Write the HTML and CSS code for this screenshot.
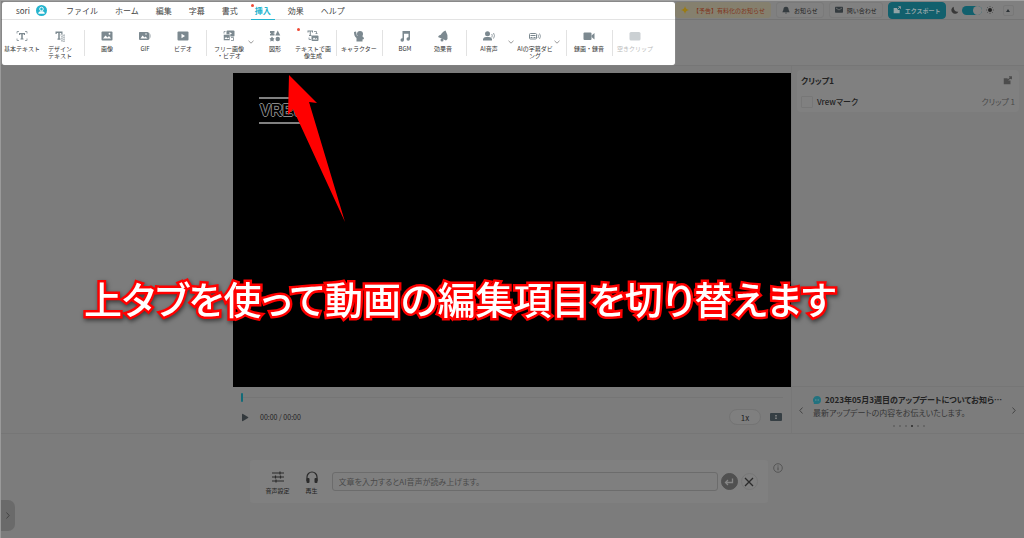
FILE: index.html
```html
<!DOCTYPE html>
<html lang="ja">
<head>
<meta charset="utf-8">
<meta name="viewport" content="width=device-width, initial-scale=1">
<title>Vrew</title>
<link rel="stylesheet" href="styles.css">
</head>
<body>
<div class="app">
  <header class="header">
    <div class="ribbon">
      <nav class="tabs">
        <span class="user">sori
          <svg class="avatar" viewBox="0 0 22 22"><circle cx="11" cy="11" r="11" fill="#25b4ce"/><circle cx="11" cy="8" r="3.6" fill="none" stroke="#fff" stroke-width="1.8"/><path d="M4.500 17.500c0-3.600 3-4.800 6.500-4.800s6.500 1.200 6.500 4.800z" fill="#fff"/></svg>
        </span>
        <button class="tab">ファイル</button>
        <button class="tab">ホーム</button>
        <button class="tab">編集</button>
        <button class="tab">字幕</button>
        <button class="tab">書式</button>
        <button class="tab active"><i class="dot"></i>挿入</button>
        <button class="tab">効果</button>
        <button class="tab">ヘルプ</button>
      </nav>
      <div class="tools">
        <div class="group first">
          <button class="tool"><svg viewBox="0 0 24 24"><path d="M2 7V3h4M18 3h4v4M22 17v4h-4M6 21H2v-4" fill="none" stroke="#7c8990" stroke-width="1.5"/><path d="M6 6h12v4h-2.200V8.500h-2.300V17h1.500v2H9v-2h1.500V8.500H8.200V10H6z"/></svg>基本テキスト</button>
          <button class="tool"><svg viewBox="0 0 24 24"><path d="M3 3h14v5h-2.500V6h-3v11h1.500v2.500H7V17h1.500V6h-3v2H3z"/><path d="M13 10c3-2 5 2 9 0M14 14c3-2 4 2 8 0M14 18c3-2 4 2 8 0M14 22c3-2 4 2 8 0" fill="none" stroke="#7c8990" stroke-width="1.6"/></svg>デザイン<br>テキスト</button>
        </div>
        <div class="group">
          <button class="tool"><svg viewBox="0 0 24 24"><path d="M3 3h18q2 0 2 2v14q0 2-2 2H3q-2 0-2-2V5q0-2 2-2z"/><path d="M4 17l5-6 4 4 3-3 4 5z" fill="#fff"/><circle cx="17" cy="7.500" r="1.800" fill="#fff"/></svg>画像</button>
          <button class="tool"><svg viewBox="0 0 24 24"><path d="M1 4h16q3 0 3 3v11q0 2-2 2H2q-2 0-2-2V6q0-2 1-2zM21 5q4 7 0 14z"/><path d="M3 17l4-6 4 4 2-2 4 4z" fill="#fff"/><circle cx="14" cy="8" r="1.500" fill="#fff"/></svg>GIF</button>
          <button class="tool"><svg viewBox="0 0 24 24"><rect x="1" y="3" width="22" height="18" rx="2"/><path d="M9 7.500v9l7-4.500z" fill="#fff"/></svg>ビデオ</button>
        </div>
        <div class="group">
          <button class="tool"><svg viewBox="0 0 24 24"><rect x="7" y="1" width="16" height="12" rx="2"/><path d="M13 4v6l5-3z" fill="#fff"/><rect x="1" y="9" width="13" height="12" rx="2" stroke="#fff"/><path d="M3 18l3-4 3 3 2-2 2 3z" fill="#fff"/><path d="M16 15h5v6h-5M2 7V3h3" fill="none" stroke="#7c8990" stroke-width="1.600"/></svg>フリー画像<br>・ビデオ</button>
          <button class="more" aria-label="その他"><svg viewBox="0 0 6 4"><path d="M.5.8 3 3.200 5.500.8"/></svg></button>
          <button class="tool"><svg viewBox="0 0 24 24"><path d="M2 2h9v3.500H9V7h2v4H2V7.500h2V6H2z"/><path d="M17.500 1l5 10h-10z"/><path d="M6 13l2 3 3 1-2 2.500.3 3.500L6 21.500 2.700 23 3 19.500 1 17l3-1z"/><circle cx="17.500" cy="18" r="4.500"/></svg>図形</button>
          <button class="tool"><i class="dot"></i><svg viewBox="0 0 24 24"><path d="M1 1h11v4h-2V3H7.500v7H9v2H4v-2h1.500V3H3v2H1z"/><path d="M14 3h5v5M17 6l2 2 2-2M4 15v4h4" fill="none" stroke="#7c8990" stroke-width="1.600"/><rect x="9" y="11" width="14" height="11" rx="2"/><path d="M11 19l3-4 3 3 2-2 2 3z" fill="#fff"/></svg>テキストで画<br>像生成</button>
        </div>
        <div class="group">
          <button class="tool"><svg viewBox="0 0 24 24"><circle cx="14" cy="8" r="6"/><path d="M2 4l4-1 2 9h10q4 2 4 6l-3 1v4H7v-7Q2 13 2 4z"/></svg>キャラクター</button>
        </div>
        <div class="group">
          <button class="tool"><svg viewBox="0 0 24 24"><path d="M7 2h15v16a3.500 3.500 0 1 1-3-3.500V7.500H10V20a3.500 3.500 0 1 1-3-3.500z"/></svg>BGM</button>
          <button class="tool"><svg viewBox="0 0 24 24"><path d="M17 1q5 8 4 17l-3 3L2 14l2-3q4-1 6-5 3-4 7-5z"/><circle cx="10" cy="20" r="3"/></svg>効果音</button>
        </div>
        <div class="group">
          <button class="tool"><svg viewBox="0 0 24 24"><circle cx="9" cy="7.500" r="5"/><path d="M0 21v-3q1-4 6-4h6q5 0 6 4v3z"/><path d="M17.500 8q2 3.500 0 7M21 6q4 5.500 0 11" fill="none" stroke="#7c8990" stroke-width="1.600"/></svg>AI音声</button>
          <button class="more" aria-label="その他"><svg viewBox="0 0 6 4"><path d="M.5.8 3 3.200 5.500.8"/></svg></button>
          <button class="tool"><svg viewBox="0 0 24 24"><rect x="1" y="7" width="14" height="11" rx="2" fill="none" stroke="#7c8990" stroke-width="2"/><path d="M3 10h10v2H3zM3 14h4v2H3zM9 14h4v2H9z"/><path d="M18 9q2 3.500 0 7M21 7q4 5.500 0 11" fill="none" stroke="#7c8990" stroke-width="1.600"/></svg>AIの字幕ダビ<br>ング</button>
          <button class="more" aria-label="その他"><svg viewBox="0 0 6 4"><path d="M.5.8 3 3.200 5.500.8"/></svg></button>
        </div>
        <div class="group">
          <button class="tool"><svg viewBox="0 0 24 24"><rect x="1" y="5" width="16" height="15" rx="2"/><path d="M17 11l6-5v13l-6-5z"/></svg>録画・録音</button>
        </div>
        <div class="group last">
          <button class="tool" disabled><svg viewBox="0 0 24 24"><rect x="1" y="4" width="22" height="17" rx="3"/></svg>空きクリップ</button>
        </div>
      </div>
    </div>
    <div class="actions">
      <button class="pill notice"><svg viewBox="0 0 12 12"><path d="M6 0q.8 5.200 6 6-5.200.8-6 6-.8-5.200-6-6 5.200-.8 6-6z" fill="#9a7b14"/></svg>【予告】有料化のお知らせ</button>
      <button class="pill"><svg viewBox="0 0 12 12"><path d="M6 1q4 0 4 5l1.500 3.500H.5L2 6q0-5 4-5zM4.500 10h3q-1.500 2.500-3 0z" fill="#343b3f"/></svg>お知らせ</button>
      <button class="pill"><svg viewBox="0 0 12 12"><rect y="1" width="12" height="9" rx="1" fill="#343b3f"/><path d="M1.500 3 6 6l4.500-3" fill="none" stroke="#808080"/></svg>問い合わせ</button>
      <button class="pill export"><svg viewBox="0 0 12 12"><path d="M1 3h5l1 3h3v5H1z"/><path d="M6.500 5.500 11 1M8 1h3.200v3.200" fill="none" stroke="#8b9598" stroke-width="1.500"/></svg>エクスポート</button>
      <svg class="mode" viewBox="0 0 12 12"><path d="M4 1a5.500 5.500 0 1 0 7 7.500Q4 9 4 1z" fill="#383838"/></svg>
      <label class="switch"><input type="checkbox" checked aria-label="テーマ切り替え"></label>
      <svg class="mode" viewBox="0 0 14 14"><circle cx="7" cy="7" r="3.500" fill="#222"/><path d="M7 0v2M7 12v2M0 7h2M12 7h2M2 2l1.500 1.500M10.500 10.500 12 12M12 2l-1.500 1.500M3.500 10.500 2 12" stroke="#333"/></svg>
      <button class="fold" aria-label="折りたたむ"></button>
    </div>
  </header>

  <main class="main">
    <div class="blank"></div>
    <section class="preview">
      <div class="video"><div class="mark">VREW</div></div>
      <div class="controls">
        <div class="seek"><i class="thumb"></i></div>
        <div class="play-row">
          <button class="play" aria-label="再生"><svg viewBox="0 0 8 9"><path d="M1 1.500v6q0 1 1 .5l5-3q.8-.5 0-1L2 1Q1 .500 1 1.500z"/></svg></button>
          <span class="time">00:00 / 00:00</span>
          <button class="speed">1x</button>
          <button class="ratio" aria-label="表示比率"><svg viewBox="0 0 12 8"><rect width="12" height="8" rx="1" fill="#363f44"/><path d="M6 2v1.500M6 4.500v1.500" stroke="#8a8a8a" stroke-width="1.500"/></svg></button>
        </div>
      </div>
    </section>
    <aside class="side">
      <div class="clip">
        <div class="clip-head"><strong>クリップ1</strong><svg viewBox="0 0 12 12"><path d="M1 3h5l1 3h3v5H1z" fill="#4c4c4c"/><path d="M6.500 5.500 11 1M8 1h3.200v3.200" fill="none" stroke="#4c4c4c" stroke-width="1.500"/></svg></div>
        <div class="clip-item"><i class="thumbnail"></i><span>Vrewマーク</span><span class="muted">クリップ 1</span></div>
      </div>
      <div class="news">
        <button class="arrow" aria-label="前へ"><svg viewBox="0 0 4 7"><path d="M3.500.5.8 3.500l2.700 3"/></svg></button>
        <div class="news-body">
          <div class="news-title"><svg viewBox="0 0 10 10"><path d="M5 0a5 5 0 1 1 0 10H1V8A5 5 0 0 1 5 0z" fill="#22727f"/><path d="M2.500 5h1M4.500 5h1M6.500 5h1" stroke="#91a1a3"/></svg>2023年05月3週目のアップデートについてお知ら…</div>
          <p>最新アップデートの内容をお伝えいたします。</p>
          <div class="pager"><i></i><i></i><i></i><i class="on"></i><i></i><i></i></div>
        </div>
        <button class="arrow" aria-label="次へ"><svg viewBox="0 0 4 7"><path d="M.5.5l2.700 3-2.700 3"/></svg></button>
      </div>
    </aside>
  </main>

  <footer class="footer">
    <button class="drawer" aria-label="開く"><svg viewBox="0 0 4 7"><path d="M.5.5l2.700 3-2.700 3"/></svg></button>
    <div class="speech">
      <button class="option"><svg viewBox="0 0 12 12"><path d="M0 2h12M0 6h12M0 10h12M8 .500v3M3.500 4.500v3M8.500 4.500v3M4 8.500v3" fill="none" stroke="#2b2b2b" stroke-width="1.200"/></svg>音声設定</button>
      <button class="option"><svg viewBox="0 0 12 12"><path d="M1 10V6a5 5 0 0 1 10 0v4" fill="none" stroke="#2b2b2b" stroke-width="1.200"/><rect x=".5" y="7" width="3" height="5" rx="1" fill="#2b2b2b"/><rect x="8.500" y="7" width="3" height="5" rx="1" fill="#2b2b2b"/></svg>再生</button>
      <input class="speech-input" type="text" aria-label="読み上げる文章" placeholder="文章を入力するとAI音声が読み上げます。">
      <button class="round enter" aria-label="入力"><svg viewBox="0 0 10 10"><path d="M8.500 1.500v4h-7M4 3 1.500 5.500 4 8" fill="none" stroke="#858585" stroke-width="1.300"/></svg></button>
      <button class="round" aria-label="閉じる"><svg viewBox="0 0 10 10"><path d="M1 1l8 8M9 1 1 9" stroke="#2b2b2b" stroke-width="1.300"/></svg></button>
    </div>
    <svg class="info" viewBox="0 0 10 10"><circle cx="5" cy="5" r="4.300" fill="none" stroke="#4c4c4c" stroke-width=".8"/><path d="M5 4.300v3M5 2.500v1" stroke="#4c4c4c"/></svg>
  </footer>

  <svg class="pointer" viewBox="0 0 60 147"><path d="M3 0 31 28 23 27 59 147 7 34 2 40z" fill="#f00"/></svg>
  <h1 class="caption">上タブを使って動画の編集項目を切り替えます</h1>
</div>
</body>
</html>
```

FILE: styles.css
```css
* { box-sizing: border-box; }

body {
  margin: 0;
  background: #7c7c7c;
  color: #222;
  font-family: "Noto Sans CJK JP", "Noto Sans", sans-serif;
  font-size: 8px;
}

button {
  margin: 0;
  padding: 0;
  border: 0;
  background: none;
  color: inherit;
  font: inherit;
}

svg { display: block; flex: none; }

.app {
  position: relative;
  display: flex;
  flex-direction: column;
  min-height: 100vh;
  overflow: hidden;
  border-top: 1px solid #a0a0a0;
  border-left: 1px solid #9a9a9a;
}

/* Header */
.header {
  display: flex;
  background: linear-gradient(#808080 18px, #747474 18px, #747474 19px, #7f7f7f 19px);
  border-bottom: 1px solid #767676;
}

.ribbon {
  flex: none;
  width: 673px;
  height: 63px;
  margin: 1px 0 0 1px;
  border-radius: 3px;
  background: #fff;
  box-shadow: 0 0 1px #ddd;
}

.tabs {
  display: flex;
  gap: 9px;
  height: 18px;
  padding-left: 14px;
  border-bottom: 1px solid #e3e3e3;
  color: #444;
}

.user {
  display: flex;
  align-items: center;
  gap: 6px;
  margin-right: 6px;
}

.avatar { width: 11px; height: 11px; }

.tab { position: relative; padding: 0 4px; }

.tab.active {
  color: #25b4ce;
  font-weight: 700;
  box-shadow: 0 1px 0 #25b4ce;
}

.dot {
  position: absolute;
  top: 2px;
  left: 0;
  width: 3px;
  height: 3px;
  border-radius: 50%;
  background: #f04a35;
}

.tools { display: flex; padding-top: 10px; }

.group {
  display: flex;
  align-items: flex-start;
  height: 26px;
  padding: 0 4px 0 3px;
  border-right: 1px solid #e2e2e2;
}

.group.first { padding: 0 5px 0 1px; }
.group.last { border-right: 0; }

.tool {
  position: relative;
  width: 38px;
  color: #333;
  font-size: 6px;
  line-height: 7px;
  white-space: nowrap;
}

.tool svg {
  width: 12px;
  height: 12px;
  margin: 0 auto 3px;
  fill: #7c8990;
}

.tool .dot { top: -2px; left: 3px; }
.tool:disabled { color: #bbb; }
.tool:disabled svg { fill: #cbd0d3; }

.more { width: 8px; padding-top: 10px; }
.more svg { width: 6px; height: 4px; fill: none; stroke: #999; }

.actions {
  flex: 1;
  display: flex;
  align-items: center;
  height: 18px;
}

.pill {
  display: flex;
  align-items: center;
  gap: 4px;
  height: 16px;
  padding: 0 5px;
  margin-right: 5px;
  border: 1px solid #7a7a7a;
  border-radius: 3px;
  background: #818181;
  font-size: 6px;
  white-space: nowrap;
}

.pill svg { width: 8px; height: 8px; }

.pill.notice {
  border-color: #85806e;
  background: #85806e;
  color: #80341c;
}

.pill.export {
  height: 17px;
  padding: 0 4px;
  border-color: #12606d;
  border-radius: 4px;
  background: #12606d;
  color: #91a3a6;
  fill: #91a3a6;
  font-weight: 700;
}

.mode { width: 8px; height: 8px; }

.switch { display: flex; margin: 0 4px 0 3px; }

.switch input {
  appearance: none;
  display: flex;
  justify-content: flex-end;
  width: 20px;
  height: 9px;
  margin: 0;
  border-radius: 5px;
  background: #12606d;
}

.switch input::before {
  content: "";
  width: 9px;
  height: 9px;
  border-radius: 50%;
  background: #828282;
}

.fold {
  display: grid;
  place-items: center;
  width: 11px;
  height: 11px;
  margin-left: 9px;
  border: 1px solid #787878;
  border-radius: 2px;
}

.fold::before {
  content: "";
  border: 2px solid transparent;
  border-top: 0;
  border-bottom: 3px solid #2c3236;
}

/* Preview and clip list */
.main {
  display: grid;
  grid-template-columns: 232fr 558fr 233fr;
  border-bottom: 1px solid #767676;
}

.preview { padding-top: 7px; }

.video {
  aspect-ratio: 558 / 314;
  padding: 24px 26px;
  background: #000;
}

.mark {
  width: 48px;
  padding-left: 1px;
  border: solid #808080;
  border-width: 2px 0;
  color: #000;
  font: 700 16px/23px "Liberation Sans", sans-serif;
  text-shadow: 1px 0 #888, -1px 0 #888, 0 1px #888, 0 -1px #888;
}

.controls { padding: 6px 8px 8px; }

.seek {
  height: 9px;
  background: linear-gradient(#757575, #757575) center / 100% 1px no-repeat;
}

.thumb {
  display: block;
  width: 2px;
  height: 9px;
  border-radius: 1px;
  background: #126b78;
}

.play-row {
  display: flex;
  align-items: center;
  margin-top: 7px;
}

.play svg { width: 8px; height: 9px; fill: #33393d; }
.time { margin-left: 11px; font-size: 7px; }

.speed {
  width: 32px;
  height: 16px;
  margin-left: auto;
  border: 1px solid #747474;
  border-radius: 8px;
  background: #7f7f7f;
}

.ratio { margin: 0 1px 0 9px; }
.ratio svg { width: 12px; height: 8px; }

.side {
  display: flex;
  flex-direction: column;
  border-left: 1px solid #777;
}

.clip {
  margin: 4px 5px;
  padding: 0 4px;
  border-radius: 4px;
  background: #808080;
}

.clip-head,
.clip-item {
  display: flex;
  align-items: center;
  height: 21px;
}

.clip-head { justify-content: space-between; padding-right: 3px; }
.clip-head strong,
.clip-item,
.news-body,
.speech-input { font-feature-settings: "palt"; }
.clip-head svg { width: 9px; height: 9px; }
.clip-item { gap: 4px; font-weight: 500; }

.thumbnail {
  width: 12px;
  height: 12px;
  border: 1px solid #777;
  border-radius: 1px;
}

.muted { margin-left: auto; color: #494949; font-weight: 400; }

.news {
  display: flex;
  align-items: center;
  margin-top: auto;
  padding: 6px 8px 5px 7px;
  border-top: 1px solid #767676;
}

.arrow svg,
.drawer svg {
  width: 4px;
  height: 7px;
  fill: none;
  stroke: #444;
}

.news-body {
  flex: 1;
  min-width: 0;
  padding-left: 10px;
  white-space: nowrap;
}

.news-title {
  display: flex;
  align-items: center;
  gap: 4px;
  height: 13px;
  font-weight: 700;
}

.news-title svg { width: 8px; height: 8px; }

.news p {
  margin: 0;
  color: #353535;
  line-height: 14px;
}

.pager {
  display: flex;
  justify-content: center;
  gap: 4px;
  padding: 5px 8px 1px 0;
}

.pager i {
  width: 2px;
  height: 2px;
  border-radius: 50%;
  background: #606060;
}

.pager .on { background: #2a2a2a; }

/* Speech bar */
.footer {
  position: relative;
  flex: 1;
  display: flex;
  justify-content: center;
  align-items: flex-start;
  gap: 5px;
  padding-top: 26px;
}

.speech {
  display: flex;
  align-items: center;
  width: 518px;
  height: 43px;
  margin-left: 7px;
  padding: 0 10px 0 11px;
  border-radius: 3px;
  background: #808080;
}

.option {
  width: 34px;
  padding-top: 2px;
  font-size: 6px;
  line-height: 8px;
}

.option svg { width: 12px; height: 12px; margin: 0 auto 4px; }

.speech-input {
  flex: 1;
  min-width: 0;
  height: 19px;
  margin: 0 3px;
  padding: 0 6px;
  border: 1px solid #6c6c6c;
  border-radius: 3px;
  background: #7f7f7f;
  font-family: inherit;
  font-size: 8px;
}

.speech-input::placeholder { color: #4a4a4a; }

.round {
  display: grid;
  place-items: center;
  width: 17px;
  height: 17px;
  border: 1px solid #777;
  border-radius: 50%;
}

.round + .round { margin-left: 3px; }
.round svg { width: 10px; height: 10px; }
.round.enter { border-color: #505050; background: #505050; }

.info { width: 10px; height: 10px; margin-top: 3px; }

.drawer {
  position: absolute;
  left: 0;
  bottom: 7px;
  display: grid;
  place-items: center;
  width: 14px;
  height: 31px;
  border-radius: 0 7px 7px 0;
  background: #6a6a6a;
}

/* Annotation layer */
.pointer {
  position: absolute;
  top: 74px;
  left: 285px;
  width: 60px;
  height: 147px;
}

.caption {
  position: absolute;
  top: 268px;
  left: 83px;
  margin: 0;
  color: #fff;
  font-size: 38px;
  font-weight: 500;
  line-height: 58px;
  white-space: nowrap;
  font-feature-settings: "palt";
  -webkit-text-stroke: 5px #f00;
  paint-order: stroke fill;
  filter: drop-shadow(1px 2px 2px #0008);
}
```
